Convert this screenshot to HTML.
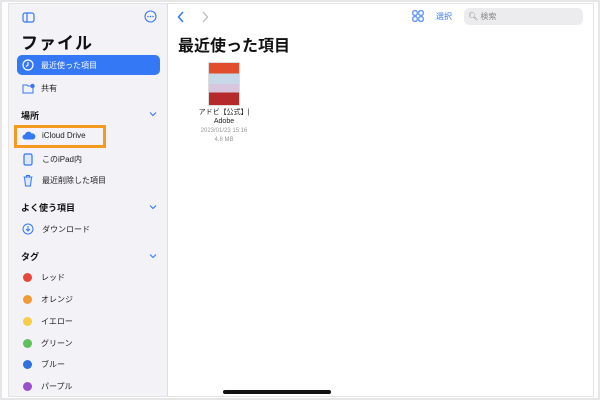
<!DOCTYPE html><html><head><meta charset="utf-8"><style>
*{margin:0;padding:0;box-sizing:border-box}
body{width:600px;height:400px;background:#fff;font-family:"Liberation Sans","Noto Sans CJK JP",sans-serif;position:relative;overflow:hidden}
.outer{position:absolute;inset:0;border:2px solid #e6e6e6}
.screen{position:absolute;left:8px;top:3px;width:586px;height:394px;border:1px solid #e4e4e4;background:#fff;overflow:hidden}
.side{position:absolute;left:0;top:0;width:159px;height:100%;background:#f2f2f7;border-right:1px solid #ddd}
.abs{position:absolute}
.item{position:absolute;left:8px;font-size:8px;color:#222;display:flex;align-items:center}
.hdr{position:absolute;left:12px;font-size:9px;font-weight:bold;color:#111}
.chev{position:absolute;left:140px}
.dot{width:9px;height:9px;border-radius:50%;display:inline-block;margin:0 9px 0 3px}
</style></head><body>
<div class="outer"></div>
<div class="screen">
<div class="side">
 <svg class="abs" style="left:13px;top:8px" width="13" height="11"><rect x="1" y="1" width="11" height="9" rx="2" fill="none" stroke="#3478f6" stroke-width="1.2"/><line x1="5" y1="1" x2="5" y2="10" stroke="#3478f6" stroke-width="1.2"/></svg>
 <svg class="abs" style="left:135px;top:6px" width="13" height="13"><circle cx="6.5" cy="6.5" r="5.5" fill="none" stroke="#3478f6" stroke-width="1.1"/><circle cx="4" cy="6.5" r=".8" fill="#3478f6"/><circle cx="6.5" cy="6.5" r=".8" fill="#3478f6"/><circle cx="9" cy="6.5" r=".8" fill="#3478f6"/></svg>
 <div class="abs" style="left:12px;top:25px;font-size:17px;font-weight:bold;color:#111;letter-spacing:1px">ファイル</div>
 <div class="abs" style="left:8px;top:51px;width:143px;height:20px;background:#3478f6;border-radius:5px"></div>
 <div class="item" style="top:55px;left:13px;color:#fff"><svg width="12" height="12" style="margin-right:7px"><circle cx="6" cy="6" r="5" fill="none" stroke="#fff" stroke-width="1.2"/><path d="M6 3v3l-2 1.5" stroke="#fff" fill="none" stroke-width="1.1"/></svg>最近使った項目</div>
 <div class="item" style="top:79px;left:13px"><svg width="13" height="11" style="margin-right:6px"><path d="M1 2h4l1 1h5v7H1z" fill="none" stroke="#3478f6" stroke-width="1"/><circle cx="10.5" cy="3" r="2.2" fill="#3478f6"/></svg>共有</div>
 <div class="hdr" style="top:105px">場所</div><svg class="chev" style="top:107px" width="8" height="6"><path d="M1 1.5l3 3 3-3" fill="none" stroke="#3478f6" stroke-width="1.1"/></svg>
 <div class="abs" style="left:5px;top:121px;width:92px;height:23px;border:3px solid #f39a1f"></div>
 <div class="item" style="top:127px;left:13px"><svg width="14" height="9" style="margin-right:6px"><path d="M3 8.5a2.5 2.5 0 0 1 0-5 3.5 3.5 0 0 1 6.5-1 2.8 2.8 0 0 1 1.5 6z" fill="#3478f6"/></svg>iCloud Drive</div>
 <div class="item" style="top:149px;left:13px"><svg width="12" height="13" style="margin-right:8px"><rect x="2" y="1" width="8" height="11" rx="1.5" fill="#dbe8fd" stroke="#3478f6" stroke-width="1.2"/></svg>このiPad内</div>
 <div class="item" style="top:170px;left:13px"><svg width="12" height="13" style="margin-right:8px"><path d="M1.5 3h9M4.5 3V1.5h3V3M2.5 3l1 9h5l1-9" fill="#dbe8fd" stroke="#3478f6" stroke-width="1"/></svg>最近削除した項目</div>
 <div class="hdr" style="top:197px">よく使う項目</div><svg class="chev" style="top:200px" width="8" height="6"><path d="M1 1.5l3 3 3-3" fill="none" stroke="#3478f6" stroke-width="1.1"/></svg>
 <div class="item" style="top:219px;left:13px"><svg width="12" height="12" style="margin-right:8px"><circle cx="6" cy="6" r="5" fill="none" stroke="#3478f6" stroke-width="1"/><path d="M6 3v5M4 6l2 2 2-2" stroke="#3478f6" fill="none" stroke-width="1"/></svg>ダウンロード</div>
 <div class="hdr" style="top:246px">タグ</div><svg class="chev" style="top:249px" width="8" height="6"><path d="M1 1.5l3 3 3-3" fill="none" stroke="#3478f6" stroke-width="1.1"/></svg>
 <div class="item" style="top:268px;left:11px"><span class="dot" style="background:#e5473b"></span>レッド</div>
 <div class="item" style="top:290px;left:11px"><span class="dot" style="background:#f29a38"></span>オレンジ</div>
 <div class="item" style="top:312px;left:11px"><span class="dot" style="background:#f6cd45"></span>イエロー</div>
 <div class="item" style="top:334px;left:11px"><span class="dot" style="background:#5dc05b"></span>グリーン</div>
 <div class="item" style="top:355px;left:11px"><span class="dot" style="background:#2f6fe0"></span>ブルー</div>
 <div class="item" style="top:377px;left:11px"><span class="dot" style="background:#9b4fce"></span>パープル</div>
</div>
<svg class="abs" style="left:168px;top:7px" width="8" height="12"><path d="M6 1L1.5 6 6 11" fill="none" stroke="#3478f6" stroke-width="1.5"/></svg>
<svg class="abs" style="left:192px;top:7px" width="8" height="12"><path d="M2 1l4.5 5L2 11" fill="none" stroke="#bbb" stroke-width="1.3"/></svg>
<svg class="abs" style="left:403px;top:6px" width="12" height="12"><g fill="none" stroke="#3478f6" stroke-width="1"><rect x=".8" y=".8" width="4.4" height="4.4" rx="1.5"/><rect x="6.8" y=".8" width="4.4" height="4.4" rx="1.5"/><rect x=".8" y="6.8" width="4.4" height="4.4" rx="1.5"/><rect x="6.8" y="6.8" width="4.4" height="4.4" rx="1.5"/></g></svg>
<div class="abs" style="left:427px;top:7px;font-size:8px;color:#3478f6">選択</div>
<div class="abs" style="left:455px;top:4px;width:119px;height:17px;background:#ececee;border-radius:5px;font-size:8px;color:#888;padding:3px 0 0 4px">&#x1F50D;&#xFE0E; 検索</div>
<div class="abs" style="left:169px;top:28px;font-size:16px;font-weight:bold;color:#111">最近使った項目</div>
<div class="abs" style="left:199px;top:58px;width:32px;height:44px;background:linear-gradient(#e04e2d 0 25%,#c7d8e8 25% 50%,#d8c6df 50% 70%,#b52a2a 70%);border:1px solid #ddd"></div>
<div class="abs" style="left:175px;top:104px;width:80px;text-align:center;font-size:7px;color:#222;line-height:9px">アドビ【公式】|<br>Adobe</div>
<div class="abs" style="left:175px;top:123px;width:80px;text-align:center;font-size:6px;color:#999;line-height:9px">2023/01/23 15:16<br>4.8 MB</div>
<div class="abs" style="left:214px;top:386px;width:108px;height:4px;border-radius:2px;background:#111"></div>
</div>
</body></html>
